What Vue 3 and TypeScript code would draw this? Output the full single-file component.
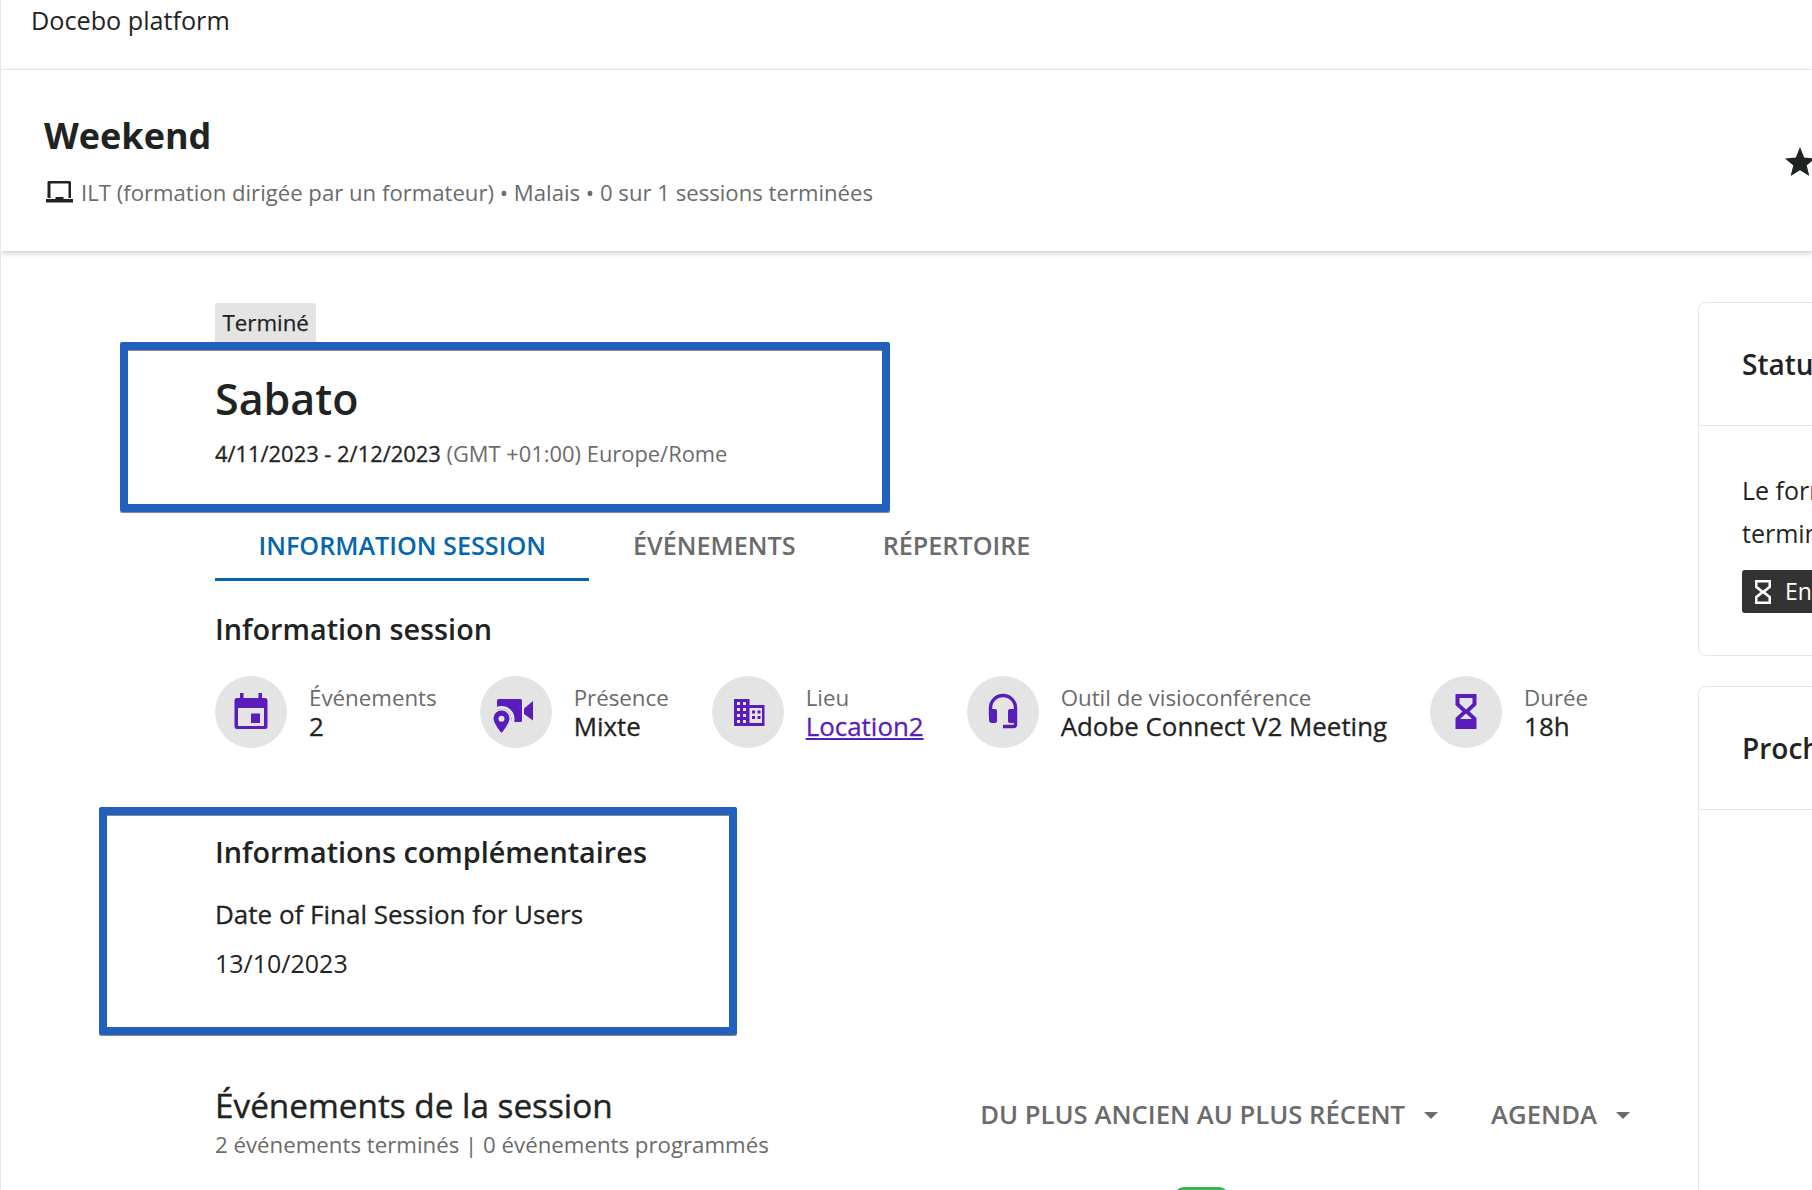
<script setup lang="ts">
interface InfoItem {
  label: string
  value: string
  link?: boolean
  icon: 'calendar' | 'video' | 'building' | 'headset' | 'hourglass'
}

const items: InfoItem[] = [
  { label: 'Événements', value: '2', icon: 'calendar' },
  { label: 'Présence', value: 'Mixte', icon: 'video' },
  { label: 'Lieu', value: 'Location2', link: true, icon: 'building' },
  { label: 'Outil de visioconférence', value: 'Adobe Connect V2 Meeting', icon: 'headset' },
  { label: 'Durée', value: '18h', icon: 'hourglass' },
]

const tabs = ['INFORMATION SESSION', 'ÉVÉNEMENTS', 'RÉPERTOIRE']
</script>

<template>
  <div class="page">
    <header class="topbar">Docebo platform</header>

    <section class="course-header">
      <div>
        <h1 class="course-title">Weekend</h1>
        <p class="course-meta">
          <svg class="laptop" viewBox="0 0 27 22" width="27" height="22">
            <path d="M2.500 0h21A1.500 1.500 0 0 1 25 1.500V17h-2.500V2.500h-18V17H1.500V1.500A1.500 1.500 0 0 1 2.500 0z" fill="#1f2423" />
            <path d="M0 18h9.500v-2h8v2H27v3.500H0z" fill="#1f2423" />
          </svg>
          <span>ILT (formation dirigée par un formateur) • Malais • 0 sur 1 sessions terminées</span>
        </p>
      </div>
      <svg class="star" viewBox="0 0 30 29" width="30" height="29">
        <path d="M15 0l4.200 10.600 10.800.8-8.300 7.100 2.700 10.500L15 23.300 5.600 29l2.700-10.500L0 11.400l10.800-.8z" fill="#1f2423" />
      </svg>
    </section>

    <div class="content">
      <main class="main">
        <span class="chip">Terminé</span>
        <h2 class="session-title">Sabato</h2>
        <p class="session-date"><b>4/11/2023 - 2/12/2023</b> (GMT +01:00) Europe/Rome</p>

        <nav class="tabs">
          <a v-for="(tab, i) in tabs" :key="tab" class="tab" :class="{ active: i === 0 }">{{ tab }}</a>
        </nav>

        <h3 class="section-title info-title">Information session</h3>
        <div class="info-row">
          <div v-for="item in items" :key="item.label" class="info-item">
            <span class="circle">
              <svg viewBox="0 0 72 72" width="72" height="72" fill="#5a1dbb">
                <template v-if="item.icon === 'calendar'">
                  <path fill-rule="evenodd" d="M25 17h3.500v5h15v-5H47v5h3a2.500 2.500 0 0 1 2.500 2.500v26A2.500 2.500 0 0 1 50 53H22a2.500 2.500 0 0 1-2.500-2.500v-26A2.500 2.500 0 0 1 22 22h3zM23 32v18h26V32z" />
                  <rect x="36" y="37.500" width="9" height="9.500" />
                </template>
                <template v-else-if="item.icon === 'video'">
                  <rect x="17" y="23" width="25" height="23" rx="1.500" />
                  <path d="M44 32.500L53 25v19.500L44 38z" />
                  <circle cx="21.500" cy="43" r="11.500" fill="none" stroke="#e4e4e4" stroke-width="3" />
                  <circle cx="21.500" cy="43" r="10" fill="#e4e4e4" />
                  <path fill-rule="evenodd" d="M21.500 34.500a8 8 0 0 1 8 8c0 5-8 14.500-8 14.500s-8-9.500-8-14.500a8 8 0 0 1 8-8zm0 5.200a3 3 0 1 0 0 6 3 3 0 0 0 0-6z" />
                </template>
                <template v-else-if="item.icon === 'building'">
                  <path fill-rule="evenodd" d="M22 23h15.500v6h15v21H22zM25 26v3h3v-3zM31 26v3h3v-3zM25 32v3h3v-3zM31 32v3h3v-3zM25 38v3h3v-3zM31 38v3h3v-3zM25 44v3h3v-3zM31 44v3h3v-3zM37.500 32v15H50V32zM40 34.500h3v3h-3zM45.500 34.500h3v3h-3zM40 40h3v3h-3zM45.500 40h3v3h-3z" />
                </template>
                <template v-else-if="item.icon === 'headset'">
                  <path d="M23.500 40v-8a12.500 12.500 0 0 1 25 0v16.500a2 2 0 0 1-2 2H36" fill="none" stroke="#5a1dbb" stroke-width="3.400" />
                  <path d="M22 33h6a2 2 0 0 1 2 2v10a2 2 0 0 1-2 2h-3a3 3 0 0 1-3-3z" />
                  <path d="M50 33h-7a2 2 0 0 0-2 2v10a2 2 0 0 0 2 2h4a3 3 0 0 0 3-3z" />
                </template>
                <template v-else>
                  <path fill-rule="evenodd" d="M25.500 18h21v11l-7 6.500 7 6.500v11h-21V42l7-6.500-7-6.500zM29.500 22v5.500l6.500 6 6.500-6V22zM36 37.500L30 43h12z" />
                </template>
              </svg>
            </span>
            <div class="info-text">
              <span class="info-label">{{ item.label }}</span>
              <a v-if="item.link" class="info-value info-link">{{ item.value }}</a>
              <span v-else class="info-value">{{ item.value }}</span>
            </div>
          </div>
        </div>

        <h3 class="section-title extra-title">Informations complémentaires</h3>
        <p class="field-name">Date of Final Session for Users</p>
        <p class="field-value">13/10/2023</p>

        <div class="events-head">
          <div>
            <h3 class="events-title">Événements de la session</h3>
            <p class="events-sub">2 événements terminés | 0 événements programmés</p>
          </div>
          <div class="events-controls">
            <span class="control">DU PLUS ANCIEN AU PLUS RÉCENT<i class="caret"></i></span>
            <span class="control">AGENDA<i class="caret"></i></span>
          </div>
        </div>
        <div class="green-pill"></div>
      </main>

      <aside class="side">
        <div class="card status-card">
          <div class="card-head">Statut de l'inscription</div>
          <div class="card-body">
            <p>Le formateur a marqué la session comme<br />terminée pour vous.</p>
            <span class="dark-chip">
              <svg viewBox="0 0 16 24" width="16" height="24" fill="#fff">
                <path fill-rule="evenodd" d="M0 0h16v7.500L10.500 12l5.500 4.500V24H0v-7.500L5.500 12 0 7.500zM2.500 2.500v3.800L8 10.500l5.500-4.200V2.500zM8 13.500l-5.500 4.200v3.800h11v-3.800z" />
              </svg>
              En attente
            </span>
          </div>
        </div>
        <div class="card next-card">
          <div class="card-head">Prochain événement</div>
        </div>
      </aside>
    </div>

    <!-- cadres d'annotation posés sur la capture -->
    <div class="annot annot-session"></div>
    <div class="annot annot-extra"></div>
  </div>
</template>

<style>
html, body { margin: 0; background: #fff; overflow: hidden; }
</style>

<style scoped>
.page {
  position: relative;
  width: 1812px;
  height: 1190px;
  box-sizing: border-box;
  border-left: 1px solid #e6e6e6;
  overflow: hidden;
  font-family: "Open Sans", "Noto Sans", sans-serif;
  color: #1f2423;
  background: #fff;
}

.topbar {
  height: 70px;
  box-sizing: border-box;
  padding: 5px 0 0 30px;
  font-size: 25.200px;
  line-height: 30px;
  border-bottom: 1px solid #f0f0f0;
}

.course-header {
  height: 181px;
  box-sizing: border-box;
  padding: 41px 0 0 43px;
  display: flex;
  justify-content: space-between;
  box-shadow: 0 2px 6px rgba(0, 0, 0, 0.22);
  position: relative;
}
.course-title { margin: 0; font-size: 36px; line-height: 50px; font-weight: 700; }
.course-meta {
  margin: 16px 0 0 2px;
  display: flex;
  align-items: center;
  gap: 8px;
  font-size: 22.150px;
  line-height: 30px;
  color: #6b6b6b;
}
.star { margin: 36px -3px 0 0; }

.content { display: flex; padding-left: 214px; }
.main { width: 1415px; flex: none; padding-top: 52px; }

.chip {
  display: block;
  width: fit-content;
  height: 40px;
  padding: 0 7.500px;
  border-radius: 3px;
  background: #e4e4e4;
  font-size: 22.300px;
  line-height: 39px;
  -webkit-text-stroke: 0.25px;
}
.session-title { margin: 28px 0 0; font-size: 43px; line-height: 56px; font-weight: 600; }
.session-date { margin: 13px 0 0; font-size: 21.900px; line-height: 28px; color: #6b6b6b; }
.session-date b { font-weight: 400; -webkit-text-stroke: 0.3px; color: #1f2423; }

.tabs { display: flex; margin-top: 45px; }
.tab {
  padding: 15px 43.500px 16px;
  font-size: 25.200px;
  line-height: 34px;
  font-weight: 600;
  color: #6b6b6b;
  border-bottom: 3px solid transparent;
}
.tab.active { color: #0466ae; border-bottom-color: #0466ae; }

.section-title { margin: 0; font-size: 28.800px; line-height: 38px; font-weight: 600; }
.info-title { margin-top: 29px; }

.info-row { display: flex; gap: 43px; margin-top: 28px; }
.info-item { display: flex; align-items: center; gap: 22px; }
.circle { width: 72px; height: 72px; border-radius: 50%; background: #e4e4e4; flex: none; display: block; }
.circle svg { display: block; }
.info-text { display: flex; flex-direction: column; }
.info-label { font-size: 22.300px; line-height: 28px; color: #6b6b6b; }
.info-value { font-size: 25.900px; line-height: 28px; -webkit-text-stroke: 0.3px; }
.info-link { color: #5a1dbb; text-decoration: underline; }

.extra-title { margin-top: 85px; }
.field-name { margin: 26px 0 0; font-size: 26px; line-height: 34px; -webkit-text-stroke: 0.3px; }
.field-value { margin: 15px 0 0; font-size: 25px; line-height: 34px; }

.events-head { display: flex; justify-content: space-between; margin-top: 103px; }
.events-title { margin: 0; font-size: 33.300px; line-height: 44px; font-weight: 400; -webkit-text-stroke: 0.4px; }
.events-sub { margin: 4px 0 0; font-size: 22.250px; line-height: 28px; color: #6b6b6b; }
.events-controls { display: flex; gap: 53px; height: 64px; }
.control {
  display: flex;
  align-items: center;
  gap: 19px;
  font-size: 25.700px;
  line-height: 34px;
  font-weight: 600;
  color: #6b6b6b;
}
.caret {
  width: 0;
  height: 0;
  border-left: 7.500px solid transparent;
  border-right: 7.500px solid transparent;
  border-top: 7.500px solid #6b6b6b;
}

.green-pill {
  width: 55px;
  height: 20px;
  margin: 28px 0 0 959px;
  border-radius: 10px;
  background: #34b84c;
}

.side { flex: none; width: 400px; margin-left: 68px; padding-top: 51px; }
.card {
  box-sizing: border-box;
  border: 1px solid #e6e6e6;
  border-radius: 8px;
  background: #fff;
}
.card + .card { margin-top: 30px; }
.card-head {
  height: 123px;
  box-sizing: border-box;
  padding: 44px 0 0 43px;
  font-size: 28px;
  line-height: 34px;
  font-weight: 600;
  border-bottom: 1px solid #e6e6e6;
  white-space: nowrap;
}
.status-card { height: 354px; }
.next-card { height: 520px; }
.card-body { padding: 43px 0 0 43px; font-size: 25px; line-height: 43px; white-space: nowrap; }
.card-body p { margin: 0; }
.dark-chip {
  display: flex;
  align-items: center;
  gap: 14px;
  width: fit-content;
  height: 43px;
  margin: 15px 0 0 0;
  padding: 0 12px 0 13px;
  border-radius: 3px;
  background: #333;
  color: #fff;
  font-size: 23px;
  font-weight: 500;
}

.annot {
  position: absolute;
  box-sizing: border-box;
  border: 8px solid #2161bd;
  border-radius: 2px;
  box-shadow: inset 0 1px 0 #8a8a8a, 0 1px 0 #8a8a8a;
}
.annot-session { left: 119px; top: 342px; width: 770px; height: 170px; }
.annot-extra { left: 98px; top: 807px; width: 638px; height: 228px; }
</style>
